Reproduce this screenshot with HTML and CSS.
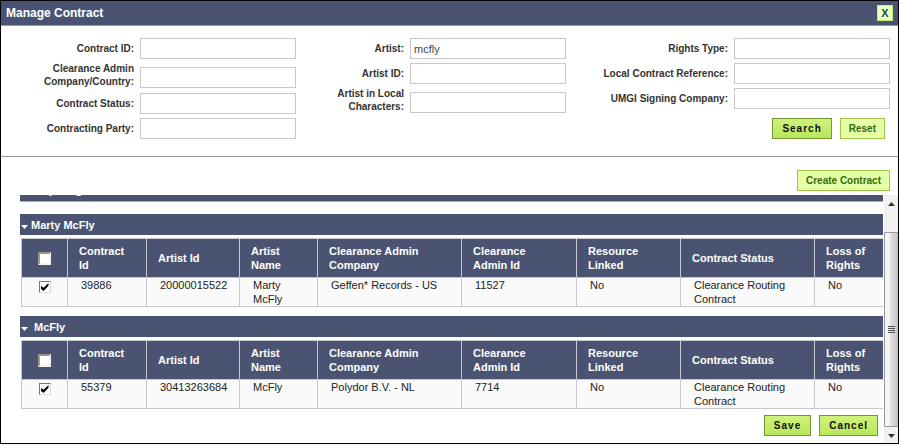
FILE: index.html
```html
<!DOCTYPE html>
<html lang="en">
<head>
<meta charset="utf-8">
<title>Manage Contract</title>
<link rel="stylesheet" href="styles.css">
</head>
<body>
<main class="dialog">
  <header class="titlebar">
    <h1>Manage Contract</h1>
    <button class="close" type="button">X</button>
  </header>

  <form class="search">
    <div class="column">
      <div class="field"><label for="contract-id">Contract ID:</label><input id="contract-id" type="text"></div>
      <div class="field tall"><label for="company">Clearance Admin<br>Company/Country:</label><input id="company" type="text"></div>
      <div class="field"><label for="status">Contract Status:</label><input id="status" type="text"></div>
      <div class="field"><label for="party">Contracting Party:</label><input id="party" type="text"></div>
    </div>
    <div class="column">
      <div class="field"><label for="artist">Artist:</label><input id="artist" type="text" value="mcfly"></div>
      <div class="field"><label for="artist-id">Artist ID:</label><input id="artist-id" type="text"></div>
      <div class="field tall"><label for="artist-local">Artist in Local<br>Characters:</label><input id="artist-local" type="text"></div>
    </div>
    <div class="column">
      <div class="field"><label for="rights">Rights Type:</label><input id="rights" type="text"></div>
      <div class="field"><label for="reference">Local Contract Reference:</label><input id="reference" type="text"></div>
      <div class="field"><label for="signing">UMGI Signing Company:</label><input id="signing" type="text"></div>
      <div class="actions form-actions">
        <button class="btn primary" type="button">Search</button>
        <button class="btn" type="reset">Reset</button>
      </div>
    </div>
  </form>

  <div class="toolbar"><button class="btn" type="button">Create Contract</button></div>

  <div class="viewport">
    <div class="results">
      <section class="group collapsed"><h2>Amy King</h2></section>

      <section class="group">
        <h2><svg class="arrow" viewBox="0 0 7 4"><path d="M0 0h7L3.500 4z"/></svg>Marty McFly</h2>
        <table>
          <colgroup><col class="c-check"><col class="c-contract"><col class="c-artist"><col class="c-name"><col class="c-company"><col class="c-admin"><col class="c-linked"><col class="c-status"><col></colgroup>
          <thead><tr>
            <th><input type="checkbox" aria-label="Select all"></th>
            <th>Contract<br>Id</th><th>Artist Id</th><th>Artist<br>Name</th><th>Clearance Admin<br>Company</th><th>Clearance<br>Admin Id</th><th>Resource<br>Linked</th><th>Contract Status</th><th>Loss of<br>Rights</th>
          </tr></thead>
          <tbody><tr>
            <td><input type="checkbox" checked aria-label="Select 39886"></td>
            <td>39886</td><td>20000015522</td><td>Marty<br>McFly</td><td>Geffen* Records - US</td><td>11527</td><td>No</td><td>Clearance Routing<br>Contract</td><td>No</td>
          </tr></tbody>
        </table>
      </section>

      <section class="group">
        <h2><svg class="arrow" viewBox="0 0 7 4"><path d="M0 0h7L3.500 4z"/></svg>&nbsp;McFly</h2>
        <table>
          <colgroup><col class="c-check"><col class="c-contract"><col class="c-artist"><col class="c-name"><col class="c-company"><col class="c-admin"><col class="c-linked"><col class="c-status"><col></colgroup>
          <thead><tr>
            <th><input type="checkbox" aria-label="Select all"></th>
            <th>Contract<br>Id</th><th>Artist Id</th><th>Artist<br>Name</th><th>Clearance Admin<br>Company</th><th>Clearance<br>Admin Id</th><th>Resource<br>Linked</th><th>Contract Status</th><th>Loss of<br>Rights</th>
          </tr></thead>
          <tbody><tr>
            <td><input type="checkbox" checked aria-label="Select 55379"></td>
            <td>55379</td><td>30413263684</td><td>McFly</td><td>Polydor B.V. - NL</td><td>7714</td><td>No</td><td>Clearance Routing<br>Contract</td><td>No</td>
          </tr></tbody>
        </table>
      </section>

      <div class="actions">
        <button class="btn primary" type="button">Save</button>
        <button class="btn primary" type="button">Cancel</button>
      </div>
    </div>
    <div class="scrollbar" aria-hidden="true">
      <div class="track-top"><svg class="arrow" viewBox="0 0 7 4"><path d="M0 4h7L3.500 0z"/></svg></div>
      <div class="thumb"><i></i><i></i><i></i><i></i></div>
      <div class="track-bottom"><svg class="arrow" viewBox="0 0 7 4"><path d="M0 0h7L3.500 4z"/></svg></div>
    </div>
  </div>
</main>
</body>
</html>
```
FILE: styles.css
```css
* { box-sizing: border-box; }

body {
  margin: 0;
  padding-bottom: 2px;
  height: 100vh;
  background: #f8f8f8;
  color: #222;
  font-family: "Liberation Sans", Arial, sans-serif;
  font-size: 11px;
  line-height: 14px;
}

h1, h2 { margin: 0; }

input, button { font-family: inherit; margin: 0; }

.dialog {
  display: flex;
  flex-direction: column;
  height: 100%;
  border: 1px solid #000;
  background: #fff;
}

.titlebar {
  display: flex;
  align-items: center;
  justify-content: space-between;
  height: 25px;
  flex: none;
  padding: 0 5px;
  background: #4a5472;
  border-bottom: 1px solid #9298a9;
  color: #fff;
}

.titlebar h1 { font-size: 12px; }

.close {
  width: 16px;
  height: 16px;
  padding: 0;
  border: 1px solid #c5ee78;
  background: #eaffc4;
  color: #1c4a50;
  font-size: 11px;
  font-weight: bold;
  line-height: 14px;
}

.search {
  display: grid;
  grid-template-columns: 295fr 270fr 324fr;
  flex: none;
  padding: 10px 8px 15px 0;
  border-bottom: 1px solid #999;
}

.field {
  display: flex;
  justify-content: flex-end;
  align-items: center;
  gap: 6px;
  padding: 2px 0;
}

.field.tall {
  align-items: flex-end;
  padding: 1px 0 3px;
}

.field label {
  color: #333;
  font-size: 10px;
  font-weight: bold;
  line-height: 13px;
  text-align: right;
}

.field input {
  width: 156px;
  height: 21px;
  padding: 0 3px;
  border: 1px solid #c8c8c8;
  background: #fff;
  color: #444;
  font-size: 11px;
}

.actions {
  display: flex;
  justify-content: flex-end;
  gap: 8px;
  padding-right: 5px;
}

.form-actions { padding-top: 7px; }

.btn {
  height: 21px;
  padding: 0 8px;
  border: 1px solid #9fc54b;
  background: #e4ffa6;
  color: #376a0a;
  font-size: 10px;
  font-weight: bold;
}

.btn.primary {
  padding: 0 9px;
  border-color: #76962f;
  background: linear-gradient(#d0f37b, #b7e65c);
  color: #111;
  letter-spacing: 1px;
}

.toolbar {
  display: flex;
  justify-content: flex-end;
  flex: none;
  padding: 13px 8px 4px;
}

.viewport {
  display: flex;
  flex: 1;
  min-height: 0;
}

.results {
  display: flex;
  flex-direction: column;
  justify-content: flex-end;
  flex: 1;
  min-width: 0;
  overflow: hidden;
  padding: 0 1px 7px 19px;
}

.group { padding-bottom: 9px; }

.group:nth-of-type(3) { padding-bottom: 6px; }

.group h2 {
  display: flex;
  align-items: center;
  gap: 3px;
  height: 21px;
  padding-left: 1px;
  background: #4a5472;
  color: #fff;
  font-size: 11px;
}

.group.collapsed { padding-bottom: 12px; }

.group.collapsed h2 {
  padding: 0 0 2px 11px;
  border-bottom: 1px solid #a9adba;
}

.arrow {
  width: 7px;
  height: 4px;
  fill: #fff;
}

.group h2 .arrow { margin-top: 4px; }

table {
  width: calc(100% - 1px);
  margin: 3px 0 0 1px;
  border-collapse: collapse;
  table-layout: fixed;
}

.c-check { width: 46px; }
.c-contract { width: 79px; }
.c-artist { width: 93px; }
.c-name { width: 78px; }
.c-company { width: 144px; }
.c-admin { width: 115px; }
.c-linked { width: 104px; }
.c-status { width: 134px; }

th, td {
  border: 1px solid #c6c8d0;
  text-align: left;
}

th:last-child, td:last-child { border-right: 0; }

th {
  height: 39px;
  padding: 0 0 0 11px;
  background: #4a5472;
  color: #fff;
  font-size: 11px;
}

td {
  height: 29px;
  padding: 0 0 0 13px;
  background: #fafafa;
  vertical-align: top;
}

th:first-child, td:first-child {
  padding: 0;
  text-align: center;
}

input[type="checkbox"] {
  appearance: none;
  display: block;
  width: 12px;
  height: 12px;
  margin: 3px auto 0;
  border: 1px solid;
  border-color: #777 #ddd #ddd #777;
  background: #fff;
}

th input[type="checkbox"] {
  width: 13px;
  height: 13px;
  margin-top: 1px;
  border: 2px solid;
  border-color: #99968f #f4f2ec #f4f2ec #99968f;
}

input[type="checkbox"]:checked::before {
  content: "";
  display: block;
  width: 8px;
  height: 8px;
  margin: 1px;
  background: #000;
  clip-path: polygon(0 30%, 38% 60%, 100% 0, 100% 35%, 38% 100%, 0 70%);
}

.scrollbar {
  display: flex;
  flex-direction: column;
  flex: none;
  width: 14px;
  background: #f1f1f1;
}

.scrollbar .arrow {
  display: block;
  margin: 0 auto;
  fill: #333;
}

.track-top { height: 37px; padding-top: 7px; }

.track-bottom { height: 16px; padding-top: 7px; }

.thumb {
  display: flex;
  flex-direction: column;
  align-items: center;
  justify-content: center;
  gap: 1px;
  flex: 1;
  border: 1px solid #979797;
  border-right: 0;
  border-radius: 2px 0 0 2px;
  background: linear-gradient(90deg, #f5f5f5 30%, #dcdcdc 50%, #c2c2c6);
}

.thumb i {
  width: 7px;
  height: 1px;
  background: #555;
}
```
